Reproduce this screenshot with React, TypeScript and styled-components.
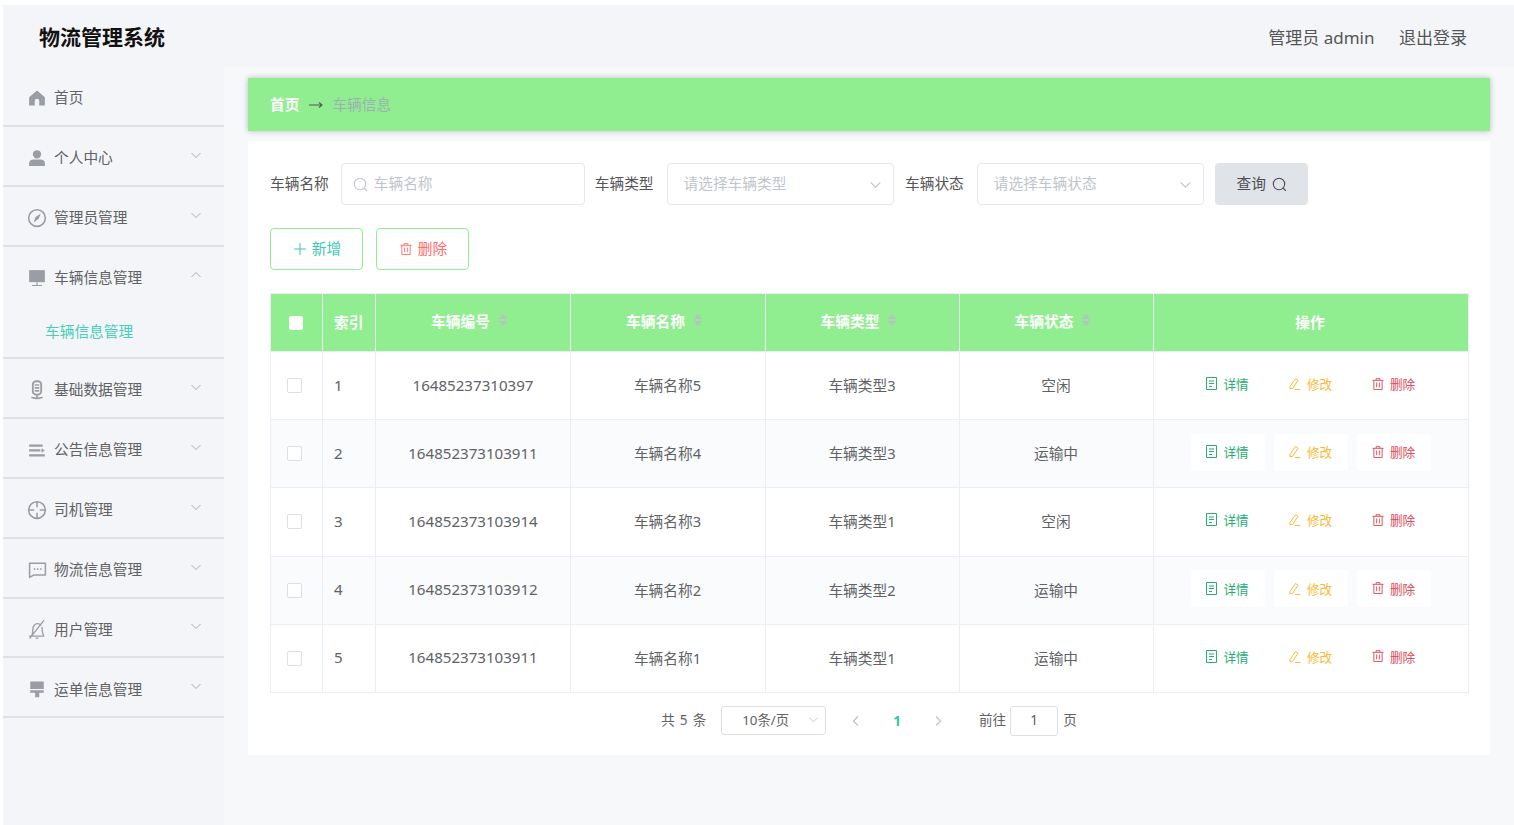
import { FC, ReactNode } from "react";
import styled, { createGlobalStyle } from "styled-components";

const FONT = `"Noto Sans", "Noto Sans CJK SC", sans-serif`;

const GlobalStyle = createGlobalStyle`
  html, body {
    margin: 0;
    padding: 0;
    background: #fff;
    font-family: ${FONT};
  }
  * { box-sizing: border-box; }
`;

/* ---- drawn icons (element-ui look) ---- */
const Svg: FC<{ size?: number; children: ReactNode }> = ({ size = 18, children }) => (
  <svg width={size} height={size} viewBox="0 0 24 24" fill="none" stroke="currentColor" strokeWidth="1.6" strokeLinecap="round" strokeLinejoin="round">
    {children}
  </svg>
);

const HomeIcon = () => (
  <Svg><path fill="currentColor" stroke="none" d="M12 2 1.500 11v11h7.500v-6a3 3 0 0 1 6 0v6h7.500V11z" /></Svg>
);
const UserIcon = () => (
  <Svg>
    <circle cx="12" cy="7" r="5.500" fill="currentColor" stroke="none" />
    <path fill="currentColor" stroke="none" d="M1.500 22.500v-3.500c0-3 2.500-5 5.500-5h10c3 0 5.500 2 5.500 5v3.500z" />
  </Svg>
);
const GaugeIcon = () => (
  <Svg size={20}>
    <circle cx="12" cy="12" r="10" strokeWidth="1.900" />
    <path fill="currentColor" stroke="none" d="M16.500 6.500 10 11l-2 6.500 6-4.500z" />
  </Svg>
);
const MonitorIcon = () => (
  <Svg>
    <path fill="currentColor" stroke="none" d="M1.500 1.500h21v16h-21z" />
    <path d="M6 22h12M12 18v4" strokeWidth="1.600" />
  </Svg>
);
const MicIcon = () => (
  <Svg size={20}>
    <rect x="7" y="1.500" width="10" height="16" rx="4" strokeWidth="2.200" />
    <path d="M10 6h4M10 9.500h4M10 13h4" strokeWidth="2" />
    <path d="M6 21c3 1 9 1 12 0M12 18v3" strokeWidth="2" />
  </Svg>
);
const OperationIcon = () => (
  <Svg>
    <path stroke="none" fill="currentColor" d="M1.500 4.500h18v3h-18zM1.500 11h15v3h-15zM1.500 17.500h21v3h-21zM18 9.500l4.500 3-4.500 3z" />
  </Svg>
);
const AimIcon = () => (
  <Svg size={20}>
    <circle cx="12" cy="12" r="10" strokeWidth="1.900" />
    <path d="M12 2v6M12 16v6M2 12h6M16 12h6" strokeWidth="1.900" />
  </Svg>
);
const ChatIcon = () => (
  <Svg size={19}>
    <path d="M2 4h20v15H7l-5 3z" strokeWidth="1.900" />
    <path d="M8 11.500h.5M12 11.500h.5M16 11.500h.5" strokeWidth="2" />
  </Svg>
);
const BellOffIcon = () => (
  <Svg size={20}>
    <path d="M3 20.500h17M5.500 20.500c1.500-3 1.500-5 1.500-8 0-4 2.500-7 5.500-7 1.500 0 3 .5 4 2M18 10c0 4 .5 7 2 10.500M3.500 23 20 2M11 23h2" strokeWidth="1.600" />
  </Svg>
);
const RollerIcon = () => (
  <Svg>
    <path fill="currentColor" stroke="none" d="M3 2h18v10H3zM3 13.500h18v3.500h-6v6H9.500v-6H3z" />
  </Svg>
);
const Chevron: FC<{ up?: boolean; size?: number }> = ({ up, size = 12 }) => (
  <svg width={size} height={size} viewBox="0 0 12 12" fill="none" stroke="currentColor" strokeWidth="1">
    <path d={up ? "M1.500 8 6 3.500 10.500 8" : "M1.500 4 6 8.500 10.500 4"} />
  </svg>
);
const SearchIcon = () => (
  <svg width="15" height="15" viewBox="0 0 15 15" fill="none" stroke="currentColor" strokeWidth="1.100" strokeLinecap="round">
    <circle cx="7" cy="7" r="5.700" />
    <path d="m11.200 11.200 2.300 2.300" />
  </svg>
);
const PlusIcon = () => (
  <svg width="12" height="12" viewBox="0 0 12 12" stroke="currentColor" strokeWidth="1"><path d="M6 0v12M0 6h12" /></svg>
);
const TrashIcon: FC<{ size?: number }> = ({ size = 13 }) => (
  <svg width={size} height={size} viewBox="0 0 13 13" fill="none" stroke="currentColor" strokeWidth="1">
    <path d="M.5 2.500h12M4.500 2.500V.7h4v1.800M2 2.500v10h9v-10M5 5v5M8 5v5" />
  </svg>
);
const DocIcon = () => (
  <svg width="11" height="13" viewBox="0 0 11 13" fill="none" stroke="currentColor" strokeWidth="1">
    <path d="M.5.500h10v12H.5zM3 4h5M3 6.500h5M3 9.500h3" />
  </svg>
);
const PenIcon = () => (
  <svg width="12" height="13" viewBox="0 0 12 13" fill="none" stroke="currentColor" strokeWidth="1">
    <path d="M1 9.500 6.500 1.500 9 3.200 3.700 11.300l-2.700.7zM6 12.500h5.500" />
  </svg>
);

/* ---- data ---- */
const menu = [
  { name: "首页", icon: <HomeIcon />, plain: true },
  { name: "个人中心", icon: <UserIcon /> },
  { name: "管理员管理", icon: <GaugeIcon /> },
  { name: "车辆信息管理", icon: <MonitorIcon />, open: true },
  { name: "基础数据管理", icon: <MicIcon /> },
  { name: "公告信息管理", icon: <OperationIcon /> },
  { name: "司机管理", icon: <AimIcon /> },
  { name: "物流信息管理", icon: <ChatIcon /> },
  { name: "用户管理", icon: <BellOffIcon /> },
  { name: "运单信息管理", icon: <RollerIcon /> },
];

const rows = [
  { no: "16485237310397", name: "车辆名称5", type: "车辆类型3", status: "空闲" },
  { no: "164852373103911", name: "车辆名称4", type: "车辆类型3", status: "运输中" },
  { no: "164852373103914", name: "车辆名称3", type: "车辆类型1", status: "空闲" },
  { no: "164852373103912", name: "车辆名称2", type: "车辆类型2", status: "运输中" },
  { no: "164852373103911", name: "车辆名称1", type: "车辆类型1", status: "运输中" },
];

const columns = [52, 53, 195, 195, 194, 194, 315];

export default function App() {
  return (
    <Page>
      <GlobalStyle />
      <Shell>
        <Header>
          <Brand>物流管理系统</Brand>
          <HeaderRight>
            <span>管理员 admin</span>
            <span>退出登录</span>
          </HeaderRight>
        </Header>
        <Body>
          <Sidebar>
            {menu.map((m) => (
              <MenuGroup key={m.name}>
                <MenuTitle>
                  <MenuIcon>{m.icon}</MenuIcon>
                  <MenuText>{m.name}</MenuText>
                  {!m.plain && (
                    <MenuArrow>
                      <Chevron up={m.open} />
                    </MenuArrow>
                  )}
                </MenuTitle>
                {m.open && <SubItem>车辆信息管理</SubItem>}
              </MenuGroup>
            ))}
          </Sidebar>
          <Main>
            <Breadcrumb>
              <CrumbHome>首页</CrumbHome>
              <CrumbArrow>
                <svg width="14" height="8" viewBox="0 0 14 8" fill="none" stroke="currentColor" strokeWidth="1.100">
                  <path d="M0 4h13M10 1.500 13 4l-3 2.500" />
                </svg>
              </CrumbArrow>
              <CrumbCurrent>车辆信息</CrumbCurrent>
            </Breadcrumb>
            <Panel>
              <FilterRow>
                <FilterLabel>车辆名称</FilterLabel>
                <SearchField>
                  <SearchIcon />
                  <FieldText>车辆名称</FieldText>
                </SearchField>
                <FilterLabel>车辆类型</FilterLabel>
                <SelectField>
                  <FieldText>请选择车辆类型</FieldText>
                  <Chevron size={13} />
                </SelectField>
                <FilterLabel>车辆状态</FilterLabel>
                <SelectField>
                  <FieldText>请选择车辆状态</FieldText>
                  <Chevron size={13} />
                </SelectField>
                <QueryButton>
                  <FieldText>查询</FieldText> <SearchIcon />
                </QueryButton>
              </FilterRow>
              <ActionRow>
                <ToolButton $color="#3cc9b0">
                  <PlusIcon /> <FieldText>新增</FieldText>
                </ToolButton>
                <ToolButton $color="#ff6b6b">
                  <TrashIcon size={12} /> <FieldText>删除</FieldText>
                </ToolButton>
              </ActionRow>
              <Table>
                <colgroup>
                  {columns.map((w, i) => (
                    <Col key={i} $width={w} />
                  ))}
                </colgroup>
                <thead>
                  <tr>
                    <HeadCell>
                      <HeadCheck />
                    </HeadCell>
                    <HeadCell $left>索引</HeadCell>
                    {["车辆编号", "车辆名称", "车辆类型", "车辆状态"].map((t) => (
                      <HeadCell key={t}>
                        <SortLabel>
                          {t}
                          <Sorter>
                            <svg width="10" height="14" viewBox="0 0 10 14" fill="currentColor">
                              <path d="M5 1 9.500 6h-9zM5 13 .5 8h9z" />
                            </svg>
                          </Sorter>
                        </SortLabel>
                      </HeadCell>
                    ))}
                    <HeadCell>操作</HeadCell>
                  </tr>
                </thead>
                <tbody>
                  {rows.map((r, i) => (
                    <Row key={i} $striped={i % 2 === 1}>
                      <Cell>
                        <RowCheck />
                      </Cell>
                      <NumberCell $left>{i + 1}</NumberCell>
                      <NumberCell>{r.no}</NumberCell>
                      <Cell>{r.name}</Cell>
                      <Cell>{r.type}</Cell>
                      <Cell>{r.status}</Cell>
                      <Cell>
                        <RowActions>
                          <RowButton $color="#27ae72">
                            <DocIcon /> 详情
                          </RowButton>
                          <RowButton $color="#fbb938">
                            <PenIcon /> 修改
                          </RowButton>
                          <RowButton $color="#dc4a55">
                            <TrashIcon size={12} /> 删除
                          </RowButton>
                        </RowActions>
                      </Cell>
                    </Row>
                  ))}
                </tbody>
              </Table>
              <Pager>
                <PagerText>共 5 条</PagerText>
                <PageSize>
                  <span>10条/页</span>
                  <Chevron size={11} />
                </PageSize>
                <PagerNav>
                  <svg width="9" height="12" viewBox="0 0 9 12" fill="none" stroke="currentColor" strokeWidth="1.300"><path d="M7 1.500 2.500 6 7 10.500" /></svg>
                  <PageNumber>1</PageNumber>
                  <svg width="9" height="12" viewBox="0 0 9 12" fill="none" stroke="currentColor" strokeWidth="1.300"><path d="M2 1.500 6.500 6 2 10.500" /></svg>
                </PagerNav>
                <Jump>
                  <PagerText>前往</PagerText>
                  <JumpBox>1</JumpBox>
                  <PagerText>页</PagerText>
                </Jump>
              </Pager>
            </Panel>
          </Main>
        </Body>
      </Shell>
    </Page>
  );
}

const Page = styled.div`
  width: 1514px;
  height: 825px;
  padding: 5px 0 0 3px;
  overflow: hidden;
  background: #fff;
`;

const Shell = styled.div`
  height: 100%;
  background: #f4f5f9;
  display: flex;
  flex-direction: column;
`;

const Header = styled.header`
  height: 62px;
  flex: none;
  display: flex;
  align-items: center;
  justify-content: space-between;
  padding: 0 47px 0 36px;
`;

const Brand = styled.div`
  font-size: 21px;
  font-weight: 700;
  color: #111;
`;

const HeaderRight = styled.div`
  display: flex;
  gap: 24.5px;
  font-size: 17px;
  color: #555;
`;

const Body = styled.div`
  flex: 1;
  display: flex;
`;

const Sidebar = styled.nav`
  width: 221px;
  flex: none;
`;

const MenuGroup = styled.div`
  border-bottom: 2px solid #dfe0e4;
`;

const MenuTitle = styled.div`
  height: 57.95px;
  display: flex;
  align-items: center;
  padding-left: 24px;
  color: #9a9da5;
`;

const MenuIcon = styled.span`
  width: 20px;
  height: 20px;
  display: flex;
  align-items: center;
  justify-content: center;
  margin: 4px 7px 0 0;
`;

const MenuText = styled.span`
  flex: 1;
  padding-top: 2px;
  font-size: 14.7px;
  color: #606266;
`;

const MenuArrow = styled.span`
  display: flex;
  margin: -2px 22px 0 0;
  color: #a8abb2;
`;

const SubItem = styled.div`
  height: 52px;
  padding-left: 42px;
  font-size: 14.7px;
  line-height: 52px;
  color: #46cfb8;
`;

const Main = styled.main`
  flex: 1;
  padding: 11px 24px 0;
  background: #f7f8fa;
`;

const Breadcrumb = styled.div`
  height: 53px;
  display: flex;
  align-items: center;
  padding: 0 0 2px 22px;
  background: #90ee90;
  box-shadow: 0 0 6px rgba(0, 0, 0, 0.25);
  font-size: 14.7px;
`;

const CrumbHome = styled.span`
  color: #fff;
  font-weight: 700;
`;

const CrumbArrow = styled.span`
  display: flex;
  margin: 2px 9px 0 10px;
  color: #4f5b50;
`;

const CrumbCurrent = styled.span`
  color: #9db2b0;
`;

const Panel = styled.section`
  margin-top: 10px;
  height: 614px;
  padding: 22px 21px 0 22px;
  background: #fff;
`;

const FilterRow = styled.div`
  height: 42px;
  display: flex;
  align-items: center;
`;

const FilterLabel = styled.label`
  padding-bottom: 4px;
  font-size: 14.7px;
  color: #555;
  margin-right: 12px;
  white-space: nowrap;
`;

const FieldText = styled.span`
  padding-bottom: 4px;
`;

const SearchField = styled.div`
  width: 244px;
  height: 42px;
  margin-right: 10px;
  display: flex;
  align-items: center;
  gap: 6px;
  padding-left: 11px;
  border: 1px solid #e4e7ed;
  border-radius: 4px;
  font-size: 14.7px;
  color: #c0c4cc;
`;

const SelectField = styled.div`
  width: 227.5px;
  height: 42px;
  margin: 0 11px 0 1px;
  display: flex;
  align-items: center;
  justify-content: space-between;
  padding: 0 11px 0 16px;
  border: 1px solid #e4e7ed;
  border-radius: 4px;
  font-size: 14.7px;
  color: #c0c4cc;
`;

const QueryButton = styled.button`
  width: 93px;
  height: 42px;
  display: flex;
  align-items: center;
  justify-content: center;
  gap: 6px;
  padding: 0;
  border: 0;
  border-radius: 4px;
  background: #e0e3e8;
  color: #4a4d52;
  font-family: ${FONT};
  font-size: 14.7px;
`;

const ActionRow = styled.div`
  display: flex;
  gap: 13px;
  margin-top: 23px;
`;

const ToolButton = styled.button<{ $color: string }>`
  width: 93px;
  height: 42px;
  display: flex;
  align-items: center;
  justify-content: center;
  gap: 6px;
  padding: 0 0 0 2px;
  border: 1px solid #90ee90;
  border-radius: 4px;
  background: #fff;
  color: ${(p) => p.$color};
  font-family: ${FONT};
  font-size: 14.7px;
`;

const Table = styled.table`
  width: 1198px;
  margin-top: 23px;
  border-collapse: collapse;
  table-layout: fixed;
  border: 1px solid #ebeef5;
`;

const Col = styled.col<{ $width: number }>`
  width: ${(p) => p.$width}px;
`;

const HeadCell = styled.th<{ $left?: boolean }>`
  height: 58px;
  padding: 0 ${(p) => (p.$left ? "0 2px 11px" : "2px 2px 0")};
  background: #90ee90;
  border: 1px solid #ebeef5;
  color: #fff;
  font-size: 14.7px;
  font-weight: 700;
  text-align: ${(p) => (p.$left ? "left" : "center")};
`;

const SortLabel = styled.span`
  display: inline-flex;
  align-items: center;
  gap: 8px;
  margin: 0 5px 3px 0;
`;

const Sorter = styled.span`
  display: flex;
  color: #b5c4c0;
`;

const HeadCheck = styled.span`
  display: block;
  width: 14px;
  height: 14px;
  margin: 2px auto 0 18px;
  background: #fff;
  border-radius: 2px;
`;

const Row = styled.tr<{ $striped: boolean }>`
  background: ${(p) => (p.$striped ? "#fafbfd" : "#fff")};
`;

const Cell = styled.td<{ $left?: boolean }>`
  height: 68.2px;
  padding: 0 1px 2px ${(p) => (p.$left ? "11px" : "0")};
  border: 1px solid #ebeef5;
  color: #606266;
  font-size: 14.7px;
  text-align: ${(p) => (p.$left ? "left" : "center")};
`;

const NumberCell = styled(Cell)`
  padding-right: 0;
  font-size: 15.1px;
`;

const RowCheck = styled.span`
  display: block;
  width: 15px;
  height: 15px;
  margin: 2px auto 0 16px;
  background: #fff;
  border: 1px solid #dcdfe6;
  border-radius: 2px;
`;

const RowActions = styled.div`
  display: flex;
  justify-content: center;
  gap: 9px;
`;

const RowButton = styled.button<{ $color: string }>`
  width: 74px;
  height: 37px;
  display: flex;
  align-items: center;
  justify-content: center;
  gap: 6px;
  margin-top: -1px;
  padding: 0 0 1px;
  border: 0;
  border-radius: 3px;
  background: #fff;
  color: ${(p) => p.$color};
  font-family: ${FONT};
  font-size: 12.6px;
`;

const Pager = styled.div`
  display: flex;
  align-items: center;
  justify-content: center;
  margin-top: 13px;
  padding-right: 1px;
  height: 30px;
`;

const PagerText = styled.span`
  padding-bottom: 4px;
  font-size: 13.6px;
  word-spacing: 1.5px;
  color: #606266;
`;

const PageSize = styled.div`
  width: 105px;
  height: 29px;
  margin-left: 15px;
  display: flex;
  align-items: center;
  justify-content: space-between;
  padding: 0 6px 2px 20px;
  border: 1px solid #dcdfe6;
  border-radius: 3px;
  font-size: 13.3px;
  color: #606266;
  svg { color: #c0c4cc; }
`;

const PagerNav = styled.div`
  display: flex;
  align-items: center;
  gap: 33px;
  margin: 0 36px 0 25px;
  color: #c0c4cc;
`;

const PageNumber = styled.span`
  font-size: 13.6px;
  font-weight: 700;
  color: #2dc8a0;
`;

const Jump = styled.div`
  display: flex;
  align-items: center;
  gap: 4px;
`;

const JumpBox = styled.span`
  width: 48px;
  height: 30px;
  display: flex;
  align-items: center;
  justify-content: center;
  margin-right: 1px;
  padding-bottom: 2px;
  border: 1px solid #dcdfe6;
  border-radius: 3px;
  font-size: 13.6px;
  color: #606266;
`;
